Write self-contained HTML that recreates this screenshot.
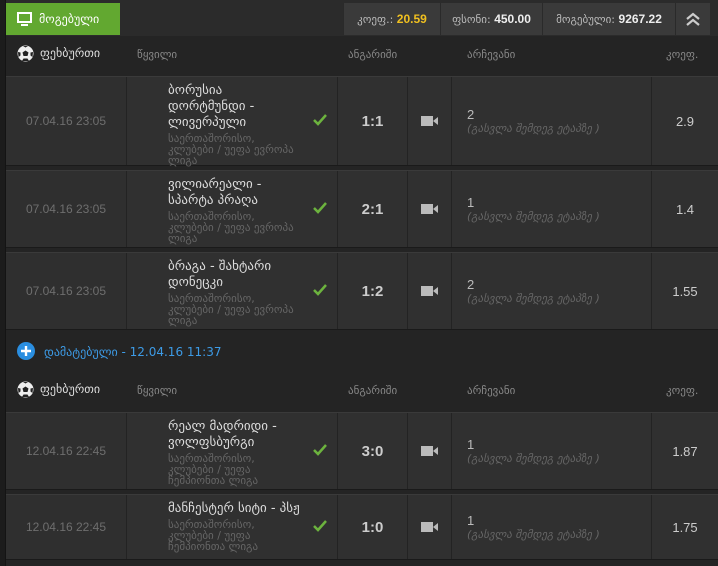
<!DOCTYPE html>
<html><head><meta charset="utf-8"><style>
*{margin:0;padding:0;box-sizing:border-box}
body{width:718px;height:566px;background:#1c1c1c;font-family:"DejaVu Sans","Liberation Sans",sans-serif;overflow:hidden;position:relative}
.wrap{position:absolute;left:5px;top:0;width:713px;height:566px;background:#242424;border-left:1px solid #141414}
.a{position:absolute}
.top{left:0;top:0;width:713px;height:36px;background:#2b2b2b}
.green{left:0;top:3px;width:114px;height:32px;background:#62a830;color:#fff;font-size:12px;line-height:32px;padding-left:33px}
.tb{top:3px;height:32px;background:#3a3a3a;border-left:1px solid #2a2a2a;color:#bbb;font-size:11px;line-height:32px;text-align:center}
.tb b{color:#eee;font-family:"Liberation Sans",sans-serif;font-size:12px}
.hdr{color:#888;font-size:11px}
.row{position:absolute;left:0;width:712px;background:#303030;border-top:1px solid #3a3a3a;border-bottom:1px solid #1a1a1a}
.c{position:absolute;top:0;bottom:0;border-right:1px solid #232323}
.date{left:0;width:121px;color:#6e6e6e;font-family:"Liberation Sans",sans-serif;font-size:12px;text-align:center;display:flex;align-items:center;justify-content:center;background:#2f2f2f}
.team{left:121px;width:211px}
.team .t{position:absolute;left:41px;width:128px;color:#ddd;font-size:13px;line-height:16px}
.team .s{color:#666;font-size:11px;line-height:11px;margin-top:2px;white-space:normal}
.chk{position:absolute;left:186px;top:50%;margin-top:-8px}
.score{left:332px;width:70px;color:#ccc;font-weight:bold;font-family:"Liberation Sans",sans-serif;font-size:15px;display:flex;align-items:center;justify-content:center}
.cam{left:402px;width:44px;display:flex;align-items:center;justify-content:center}
.ch{left:446px;width:200px;padding-left:15px;display:flex;flex-direction:column;justify-content:center}
.ch .n{color:#bbb;font-family:"Liberation Sans",sans-serif;font-size:13px}
.ch .i{color:#666;font-size:11px;font-style:italic}
.cf{left:646px;width:66px;border-right:none;color:#ccc;font-family:"Liberation Sans",sans-serif;font-size:13px;display:flex;align-items:center;justify-content:center}
</style></head><body>
<div class="wrap">
<div class="a top"></div>
<div class="a green">მოგებული</div>
<svg class="a" style="left:11px;top:12px" width="15" height="14" viewBox="0 0 15 14"><rect x="1" y="1" width="13" height="9" fill="none" stroke="#fff" stroke-width="2"/><rect x="4" y="12" width="7" height="2" fill="#fff"/></svg>
<div class="a tb" style="left:337px;width:97px">კოეფ.: <b style="color:#f0c020">20.59</b></div>
<div class="a tb" style="left:434px;width:102px">ფსონი: <b>450.00</b></div>
<div class="a tb" style="left:536px;width:133px">მოგებული: <b>9267.22</b></div>
<div class="a tb" style="left:669px;width:35px"><svg width="16" height="16" viewBox="0 0 16 16" style="margin-top:8px"><path d="M2 8l6-5 6 5M2 14l6-5 6 5" fill="none" stroke="#ccc" stroke-width="2.2"/></svg></div>

<svg class="a" style="left:11px;top:45px" width="17" height="17" viewBox="0 0 17 17"><circle cx="8.5" cy="8.5" r="8" fill="#eee"/><path d="M8.5 5.5l3 2-1 3.5h-4l-1-3.5z" fill="#222"/><path d="M1 7l2.5 0.5 0 3L1.5 12zM16 7l-2.5 0.5 0 3 2 1.5zM6 1l2.5 1.5L11 1zM5 16l1.5-2.5h4L12 16z" fill="#222"/></svg>
<div class="a" style="left:34px;top:46px;color:#ddd;font-size:12px">ფეხბურთი</div>
<div class="a hdr" style="left:131px;top:48px">წყვილი</div>
<div class="a hdr" style="left:342px;top:48px">ანგარიში</div>
<div class="a hdr" style="left:461px;top:48px">არჩევანი</div>
<div class="a hdr" style="left:660px;top:48px">კოეფ.</div>

<div class="row" style="top:76px;height:90px">
<div class="c date">07.04.16 23:05</div>
<div class="c team"><div class="t" style="top:6px">ბორუსია დორტმუნდი - ლივერპული<div class="s">საერთაშორისო, კლუბები / უეფა ევროპა ლიგა</div></div><svg class="chk" width="14" height="14" viewBox="0 0 14 14"><path d="M1 7l4 4 8-9" fill="none" stroke="#6cb33e" stroke-width="2.5"/></svg></div>
<div class="c score">1:1</div>
<div class="c cam"><svg width="17" height="10"><rect width="12" height="10" fill="#bbb"/><path d="M12 5l5-4v8z" fill="#bbb"/></svg></div>
<div class="c ch"><div class="n">2</div><div class="i">(გასვლა შემდეგ ეტაპზე )</div></div>
<div class="c cf">2.9</div>
</div>

<div class="row" style="top:170px;height:78px">
<div class="c date">07.04.16 23:05</div>
<div class="c team"><div class="t" style="top:6px">ვილიარეალი - სპარტა პრაღა<div class="s">საერთაშორისო, კლუბები / უეფა ევროპა ლიგა</div></div><svg class="chk" width="14" height="14" viewBox="0 0 14 14"><path d="M1 7l4 4 8-9" fill="none" stroke="#6cb33e" stroke-width="2.5"/></svg></div>
<div class="c score">2:1</div>
<div class="c cam"><svg width="17" height="10"><rect width="12" height="10" fill="#bbb"/><path d="M12 5l5-4v8z" fill="#bbb"/></svg></div>
<div class="c ch"><div class="n">1</div><div class="i">(გასვლა შემდეგ ეტაპზე )</div></div>
<div class="c cf">1.4</div>
</div>

<div class="row" style="top:252px;height:78px">
<div class="c date">07.04.16 23:05</div>
<div class="c team"><div class="t" style="top:6px">ბრაგა - შახტარი დონეცკი<div class="s">საერთაშორისო, კლუბები / უეფა ევროპა ლიგა</div></div><svg class="chk" width="14" height="14" viewBox="0 0 14 14"><path d="M1 7l4 4 8-9" fill="none" stroke="#6cb33e" stroke-width="2.5"/></svg></div>
<div class="c score">1:2</div>
<div class="c cam"><svg width="17" height="10"><rect width="12" height="10" fill="#bbb"/><path d="M12 5l5-4v8z" fill="#bbb"/></svg></div>
<div class="c ch"><div class="n">2</div><div class="i">(გასვლა შემდეგ ეტაპზე )</div></div>
<div class="c cf">1.55</div>
</div>

<svg class="a" style="left:11px;top:342px" width="18" height="18" viewBox="0 0 18 18"><circle cx="9" cy="9" r="9" fill="#2a8ee0"/><path d="M4 9h10M9 4v10" stroke="#fff" stroke-width="2.4"/></svg>
<div class="a" style="left:38px;top:345px;color:#3d9be6;font-size:12px">დამატებული - 12.04.16 11:37</div>

<svg class="a" style="left:11px;top:381px" width="17" height="17" viewBox="0 0 17 17"><circle cx="8.5" cy="8.5" r="8" fill="#eee"/><path d="M8.5 5.5l3 2-1 3.5h-4l-1-3.5z" fill="#222"/><path d="M1 7l2.5 0.5 0 3L1.5 12zM16 7l-2.5 0.5 0 3 2 1.5zM6 1l2.5 1.5L11 1zM5 16l1.5-2.5h4L12 16z" fill="#222"/></svg>
<div class="a" style="left:34px;top:382px;color:#ddd;font-size:12px">ფეხბურთი</div>
<div class="a hdr" style="left:131px;top:384px">წყვილი</div>
<div class="a hdr" style="left:342px;top:384px">ანგარიში</div>
<div class="a hdr" style="left:461px;top:384px">არჩევანი</div>
<div class="a hdr" style="left:660px;top:384px">კოეფ.</div>

<div class="row" style="top:412px;height:78px">
<div class="c date">12.04.16 22:45</div>
<div class="c team"><div class="t" style="top:6px">რეალ მადრიდი - ვოლფსბურგი<div class="s">საერთაშორისო, კლუბები / უეფა ჩემპიონთა ლიგა</div></div><svg class="chk" width="14" height="14" viewBox="0 0 14 14"><path d="M1 7l4 4 8-9" fill="none" stroke="#6cb33e" stroke-width="2.5"/></svg></div>
<div class="c score">3:0</div>
<div class="c cam"><svg width="17" height="10"><rect width="12" height="10" fill="#bbb"/><path d="M12 5l5-4v8z" fill="#bbb"/></svg></div>
<div class="c ch"><div class="n">1</div><div class="i">(გასვლა შემდეგ ეტაპზე )</div></div>
<div class="c cf">1.87</div>
</div>

<div class="row" style="top:494px;height:66px">
<div class="c date">12.04.16 22:45</div>
<div class="c team"><div class="t" style="top:6px;white-space:nowrap">მანჩესტერ სიტი - პსჟ<div class="s" style="width:128px">საერთაშორისო, კლუბები / უეფა ჩემპიონთა ლიგა</div></div><svg class="chk" width="14" height="14" viewBox="0 0 14 14"><path d="M1 7l4 4 8-9" fill="none" stroke="#6cb33e" stroke-width="2.5"/></svg></div>
<div class="c score">1:0</div>
<div class="c cam"><svg width="17" height="10"><rect width="12" height="10" fill="#bbb"/><path d="M12 5l5-4v8z" fill="#bbb"/></svg></div>
<div class="c ch"><div class="n">1</div><div class="i">(გასვლა შემდეგ ეტაპზე )</div></div>
<div class="c cf">1.75</div>
</div>
</div>
</body></html>
